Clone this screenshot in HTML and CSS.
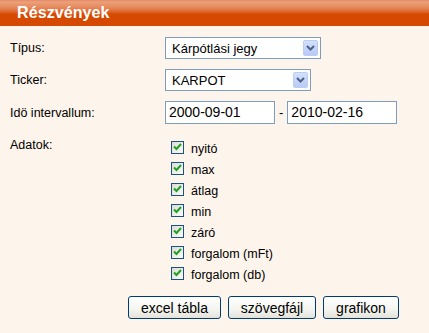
FILE: index.html
```html
<!DOCTYPE html>
<html lang="hu">
<head>
<meta charset="utf-8">
<link rel="stylesheet" href="styles.css">
</head>
<body>
<div class="panel">
  <div class="header"><span class="title">Részvények</span></div>
  <div class="form">
    <div class="row row-first">
      <div class="label">Típus:</div>
      <div class="select select-wide">
        <span class="select-text">Kárpótlási jegy</span>
        <span class="select-btn"><svg width="9" height="6" viewBox="0 0 9 6"><path d="M1 1 L4.5 4.5 L8 1" fill="none" stroke="#4d6185" stroke-width="2"/></svg></span>
      </div>
    </div>
    <div class="row">
      <div class="label">Ticker:</div>
      <div class="select select-narrow">
        <span class="select-text">KARPOT</span>
        <span class="select-btn"><svg width="9" height="6" viewBox="0 0 9 6"><path d="M1 1 L4.5 4.5 L8 1" fill="none" stroke="#4d6185" stroke-width="2"/></svg></span>
      </div>
    </div>
    <div class="row">
      <div class="label">Idö intervallum:</div>
      <div class="dates">
        <div class="input">2000-09-01</div>
        <span class="dash">-</span>
        <div class="input">2010-02-16</div>
      </div>
    </div>
    <div class="row row-data">
      <div class="label label-data">Adatok:</div>
      <ul class="checks">
        <li><span class="cb"><svg width="9" height="8" viewBox="0 0 9 8"><path d="M1 3.5 L3.5 6 L8 1" fill="none" stroke="#21a121" stroke-width="2"/></svg></span>nyitó</li>
        <li><span class="cb"><svg width="9" height="8" viewBox="0 0 9 8"><path d="M1 3.5 L3.5 6 L8 1" fill="none" stroke="#21a121" stroke-width="2"/></svg></span>max</li>
        <li><span class="cb"><svg width="9" height="8" viewBox="0 0 9 8"><path d="M1 3.5 L3.5 6 L8 1" fill="none" stroke="#21a121" stroke-width="2"/></svg></span>átlag</li>
        <li><span class="cb"><svg width="9" height="8" viewBox="0 0 9 8"><path d="M1 3.5 L3.5 6 L8 1" fill="none" stroke="#21a121" stroke-width="2"/></svg></span>min</li>
        <li><span class="cb"><svg width="9" height="8" viewBox="0 0 9 8"><path d="M1 3.5 L3.5 6 L8 1" fill="none" stroke="#21a121" stroke-width="2"/></svg></span>záró</li>
        <li><span class="cb"><svg width="9" height="8" viewBox="0 0 9 8"><path d="M1 3.5 L3.5 6 L8 1" fill="none" stroke="#21a121" stroke-width="2"/></svg></span>forgalom (mFt)</li>
        <li><span class="cb"><svg width="9" height="8" viewBox="0 0 9 8"><path d="M1 3.5 L3.5 6 L8 1" fill="none" stroke="#21a121" stroke-width="2"/></svg></span>forgalom (db)</li>
      </ul>
    </div>
    <div class="buttons">
      <button class="btn btn-excel">excel tábla</button>
      <button class="btn btn-text">szövegfájl</button>
      <button class="btn btn-graph">grafikon</button>
    </div>
  </div>
</div>
</body>
</html>
```

FILE: styles.css
```css
html, body {
  margin: 0;
  padding: 0;
  background: #fdf4eb;
}
body {
  font-family: "Liberation Sans", Arial, sans-serif;
  color: #000;
  width: 429px;
  height: 333px;
  overflow: hidden;
}
.panel {
  width: 429px;
}
.header {
  height: 26px;
  background: linear-gradient(to bottom, #e48a62 0px, #eca07c 2px, #e58656 8px, #dd6428 12px, #d64a02 14px, #d44800 26px);
  display: flex;
  align-items: center;
  padding-left: 17px;
  box-sizing: border-box;
}
.title {
  color: #fff;
  font-weight: bold;
  font-size: 16px;
  letter-spacing: 0.1px;
  margin-top: -1px;
}
.form {
  padding: 11px 0 0 10px;
}
.row {
  display: grid;
  grid-template-columns: 155px 1fr;
  align-items: center;
  margin-bottom: 10px;
}
.label {
  font-size: 12.5px;
}
.select {
  height: 22px;
  box-sizing: border-box;
  border: 1px solid #7f9db9;
  background: #fff;
  display: flex;
  align-items: center;
  justify-content: space-between;
  padding: 2px 2px 2px 6px;
}
.select-wide { width: 156px; }
.select-narrow { width: 146px; }
.select-text {
  font-size: 13px;
}
.select-btn {
  width: 15px;
  height: 16px;
  box-sizing: border-box;
  border: 1px solid #b9cdf5;
  border-radius: 2px;
  background: linear-gradient(to bottom, #d3e0fd, #b8cbf6);
  display: flex;
  align-items: center;
  justify-content: center;
}
.dates {
  display: flex;
  align-items: center;
}
.input {
  width: 110px;
  height: 23px;
  box-sizing: border-box;
  border: 1px solid #7f9db9;
  background: #fff;
  font-size: 14px;
  padding: 2px 0 0 3px;
}
.dash {
  font-size: 13px;
  margin: 0 4px 0 4px;
}
.row-data {
  align-items: start;
  margin-top: 14px;
  margin-bottom: 0;
}
.label-data {
  margin-top: 0;
}
.checks {
  list-style: none;
  margin: 0;
  padding: 0 0 0 6px;
}
.checks li {
  height: 21px;
  display: flex;
  align-items: center;
  font-size: 12.5px;
}
.cb {
  width: 13px;
  height: 13px;
  box-sizing: border-box;
  border: 1px solid #1c5180;
  background: linear-gradient(135deg, #dcdcd7, #fbfbf9);
  display: flex;
  align-items: center;
  justify-content: center;
  margin-right: 7px;
  margin-top: -3px;
}
.buttons {
  display: flex;
  gap: 7px;
  padding-left: 118px;
  margin-top: 11px;
}
.btn {
  height: 23px;
  box-sizing: border-box;
  border: 1px solid #003c74;
  border-radius: 3px;
  background: linear-gradient(to bottom, #ffffff 0%, #f4f4f0 60%, #e3e2da 100%);
  font-family: "Liberation Sans", Arial, sans-serif;
  font-size: 14px;
  color: #000;
  padding: 0;
}
.btn-excel { width: 93px; }
.btn-text { width: 88px; }
.btn-graph { width: 76px; }
```
